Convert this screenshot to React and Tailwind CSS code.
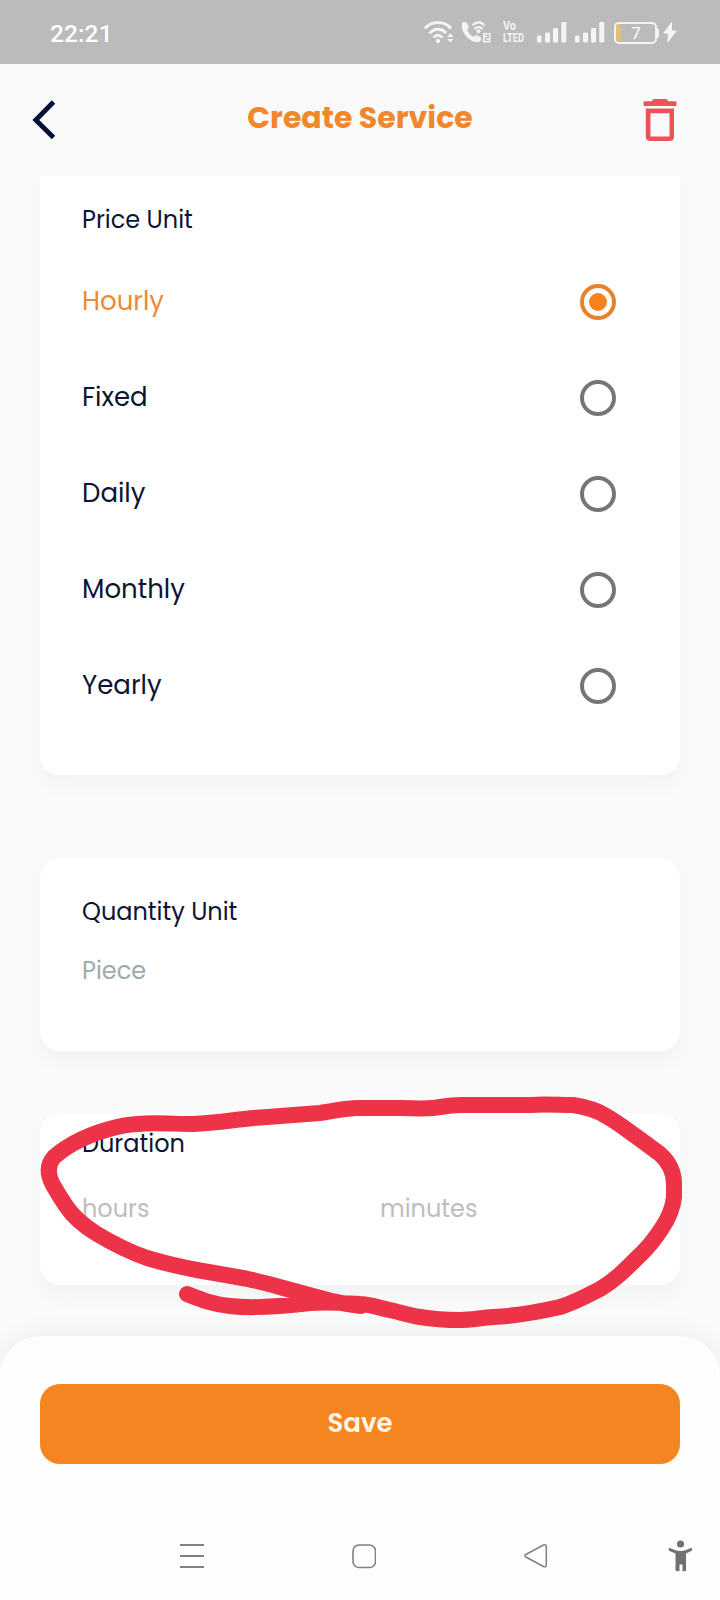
import React from "react";

const priceUnits = [
  { label: "Hourly", selected: true },
  { label: "Fixed" },
  { label: "Daily" },
  { label: "Monthly" },
  { label: "Yearly" },
];

function Signal() {
  return (
    <svg className="h-6 w-[30px] shrink-0" viewBox="0 0 30 24" fill="#f4f4f4">
      <rect x="0" y="15.500" width="4.500" height="7" rx="1" />
      <rect x="8" y="12.500" width="5" height="10" rx="1" />
      <rect x="16" y="8" width="5" height="14.500" rx="1" />
      <rect x="24.300" y="2" width="5" height="20.500" rx="1" />
    </svg>
  );
}

function StatusBar() {
  return (
    <div className="flex h-16 shrink-0 items-center bg-[#bbbbbb] pl-[50px] pr-[43px] text-white">
      <span className="mt-[3px] font-['Roboto',sans-serif] text-[24.500px] font-medium leading-8 tracking-[0.1px]">22:21</span>
      <div className="ml-auto flex items-center">
        <svg className="h-6 w-[30px]" viewBox="0 0 30 24" fill="none" stroke="#f4f4f4" strokeWidth="3">
          <path d="M1 8.500C8 .5 20 .5 27 8.500M5.500 13.500C10.500 8 17.500 8 22 13M9.500 17.500C12.500 14.500 15.500 14.500 18.500 17.500" />
          <circle cx="14" cy="21" r="2.200" fill="#f4f4f4" stroke="none" />
          <path d="M23 17L26.300 13.300L29.600 17ZM23 19L26.300 22.500L29.600 19Z" fill="#f4f4f4" stroke="none" />
        </svg>
        <svg className="ml-[7px] h-6 w-[30px]" viewBox="0 0 30 24" fill="#f4f4f4">
          <path d="M1 3C2 1.500 5 1.500 6 3L7.800 7C7.800 8.500 6 9 6.500 10.500C7.500 13.500 9.500 15.500 12 16.500C13.500 17 14 15 15.500 15L19.500 17C21 18.500 20 21 18 21.800C10 23.500-1 13 1 3Z" />
          <path d="M11.500 5.500C15 1.300 20 1.300 23.500 5.500M13.500 9C16 6.300 19 6.300 21.500 9" fill="none" stroke="#f4f4f4" strokeWidth="2.200" />
          <circle cx="17.500" cy="11.300" r="2" />
          <path fillRule="evenodd" d="M22 13H29.500V22.500H22ZM23.800 14.500V15.800H26.500V17H23.800V21H28V19.800H25V18.200H28V14.500Z" />
        </svg>
        <div className="ml-3 flex h-6 w-[23px] flex-col font-['Roboto',sans-serif] text-[12px] font-bold leading-[12px] text-[#f4f4f4]">
          <span className="w-[23px] origin-left scale-x-[0.9]">Vo</span>
          <span className="w-[30px] origin-left scale-x-[0.77]">LTED</span>
        </div>
        <div className="ml-[11px]"><Signal /></div>
        <div className="ml-2"><Signal /></div>
        <div className="ml-[9px] mt-[1px] flex items-center">
          <div className="flex h-[22px] w-[43px] overflow-hidden rounded-[5px] border-2 border-[#f4f4f4]">
            <div className="w-[5px] shrink-0 bg-[#dfbe80]" />
            <span className="w-[30px] text-center font-['Roboto',sans-serif] text-[17px] leading-[19px]">7</span>
          </div>
          <div className="h-2.5 w-[2px] rounded-r bg-[#f4f4f4]" />
        </div>
        <svg className="ml-1 h-6 w-[14px]" viewBox="0 0 14 24" fill="#f4f4f4">
          <path d="M9 1.500L0 13.500H5L4.500 23L14 10.500H9Z" />
        </svg>
      </div>
    </div>
  );
}

function Header() {
  return (
    <header className="flex h-28 shrink-0 items-center justify-between pl-8 pr-[43px]">
      <svg className="h-10 w-6" viewBox="0 0 24 40" fill="none" stroke="#051036" strokeWidth="4.800">
        <path d="M21.500 2L3.800 20L21.500 37.500" />
      </svg>
      <h1 className="mb-[5px] ml-[21px] whitespace-nowrap text-[30px] font-bold leading-10 text-[#f0872a]">Create Service</h1>
      <svg className="h-[42px] w-[34px]" viewBox="0 0 34 42" fill="#ea5458">
        <path d="M10.500 0H23.500L25.500 2.200H32.500Q33.500 2.200 33.500 3.200V6Q33.500 7 32.500 7H1.500Q.5 7 .5 6V3.200Q.5 2.200 1.500 2.200H8.500Z" />
        <path fillRule="evenodd" d="M2.800 9.500H31V37.500C31 40.500 29.500 42 26.500 42H7.300C4.300 42 2.800 40.500 2.800 37.500ZM7.500 14.200V37.500H26.500V14.200Z" />
      </svg>
    </header>
  );
}

function Radio({ selected }) {
  return selected ? (
    <span className="flex size-9 items-center justify-center rounded-full border-4 border-[#e6832a]">
      <span className="size-[18px] rounded-full bg-[#f5821f]" />
    </span>
  ) : (
    <span className="size-9 rounded-full border-4 border-[#757575]" />
  );
}

const cardShadow = "shadow-[0_10px_20px_rgba(50,80,90,0.045)]";

export default function App() {
  return (
    <div className="relative flex h-[1600px] w-[720px] flex-col overflow-hidden bg-[#fafafa] font-['Poppins','Inter',sans-serif] text-[#0b1533]">
      <StatusBar />
      <Header />

      <main className="flex h-[1160px] shrink-0 flex-col overflow-hidden px-10">
        <section className={`h-[599px] shrink-0 rounded-b-[20px] bg-white px-[42px] ${cardShadow}`}>
          <h2 className="pt-[26px] text-[24px] leading-9">Price Unit</h2>
          <div className="mt-4 flex flex-col">
            {priceUnits.map((u) => (
              <div key={u.label} className="flex h-24 items-center justify-between pr-[22px]">
                <span className={`mb-[2px] text-[26px] leading-9 ${u.selected ? "text-[#ec8a34]" : ""}`}>{u.label}</span>
                <Radio selected={u.selected} />
              </div>
            ))}
          </div>
        </section>

        <section className={`mt-[83px] h-[193px] shrink-0 rounded-[20px] bg-white px-[42px] ${cardShadow}`}>
          <h2 className="pt-[36px] text-[24px] leading-9">Quantity Unit</h2>
          <p className="mt-[23px] text-[24px] leading-9 text-[#9dabaf]">Piece</p>
        </section>

        <section className={`mt-[62px] h-[172px] shrink-0 rounded-[20px] bg-white px-[42px] ${cardShadow}`}>
          <h2 className="pt-[13px] text-[24px] leading-9">Duration</h2>
          <div className="mt-[29px] grid grid-cols-[298px_1fr] text-[24px] leading-9 text-[#bdbdbd]">
            <span>hours</span>
            <span>minutes</span>
          </div>
        </section>
      </main>

      <footer className="flex h-[264px] shrink-0 flex-col rounded-t-[40px] bg-[#fefefe] px-10 pt-12 shadow-[0_-6px_20px_rgba(50,80,90,0.06)]">
        <button className="h-20 w-full rounded-[20px] bg-[#f58520] pb-[2px] text-[26px] font-semibold leading-9 text-[#fff6e8]">Save</button>
        <nav className="mt-[72px] flex h-10 items-center pl-[140px] text-[#808080]">
          <svg className="h-[26px] w-6 shrink-0" viewBox="0 0 24 26" fill="none" stroke="currentColor" strokeWidth="2">
            <path d="M0 2H24M0 13H24M0 24H24" />
          </svg>
          <svg className="ml-[148px] h-[26px] w-6 shrink-0" viewBox="0 0 24 26" fill="none" stroke="currentColor" strokeWidth="1.600">
            <rect x="1" y="2" width="22.500" height="22.500" rx="6" />
          </svg>
          <svg className="ml-[148px] h-[26px] w-6 shrink-0" viewBox="0 0 24 26" fill="none" stroke="currentColor" strokeWidth="1.500">
            <path d="M1.800 11.500L19.500 2C21.200 1.200 22.300 1.800 22.300 3.500V22C22.300 23.800 21.200 24.300 19.500 23.500L1.800 14C.6 13.200.6 12.200 1.800 11.500Z" />
          </svg>
          <svg className="ml-[120px] h-8 w-6 shrink-0" viewBox="0 0 24 32" fill="#717171">
            <circle cx="12.500" cy="4" r="3.600" />
            <path d="M1.300 7.800L7.500 10.300Q12.500 11.700 17.500 10.300L23.300 7.800Q25 9.500 23.700 10.800L18 13.500V30.500Q17.200 31.800 14.500 31V24.500H11.500V31Q8.500 31.800 7.500 30.500V13.500L1 10.800Q0 9 1.300 7.800Z" />
          </svg>
        </nav>
      </footer>

      <svg className="pointer-events-none absolute inset-0 h-[1600px] w-[720px]" viewBox="0 0 720 1600" fill="none" stroke="#ec3347" strokeWidth="16" strokeLinecap="round" strokeLinejoin="round">
        <path d="M361 1306C345 1304 330 1301 320 1298L287 1289C270 1284 255 1280 237 1277L197 1270C180 1267 164 1263 147 1258C130 1252 112 1243 97 1234C84 1226 72 1215 66 1206C60 1197 57 1192 53 1185C47 1174 47 1165 54 1157C70 1143 92 1133 117 1127C142 1121 168 1124 193 1124C214 1123 233 1120 253 1118L320 1113C335 1111 345 1108 358 1108H400C412 1108 422 1109 433 1108C442 1107 450 1105 460 1105H530C545 1104 558 1105 573 1105C586 1107 597 1110 606 1116C617 1122 627 1130 637 1137L660 1154C669 1162 674 1173 674 1184V1197C673 1208 668 1219 662 1228C655 1239 648 1248 637 1258C625 1270 614 1281 600 1289C585 1297 573 1303 560 1307C538 1312 516 1316 493 1317C480 1318 470 1320 460 1320C446 1320 432 1319 420 1317C408 1315 399 1312 390 1310C379 1308 370 1304 360 1304C345 1303 327 1302 310 1303C285 1306 255 1309 230 1306C211 1304 200 1299 187 1294" />
      </svg>
    </div>
  );
}
